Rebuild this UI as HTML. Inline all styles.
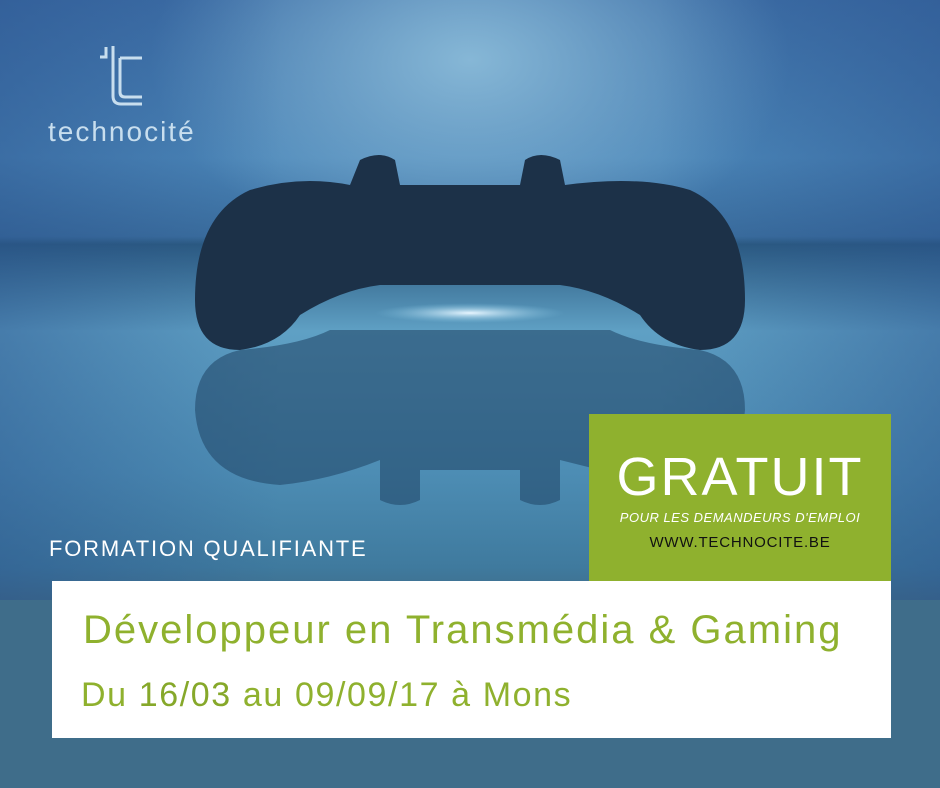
<!DOCTYPE html>
<html><head><meta charset="utf-8"><style>
*{margin:0;padding:0;box-sizing:border-box}
body{width:940px;height:788px;overflow:hidden;position:relative;font-family:"Liberation Sans",sans-serif;background:#3f6d8a}
.bg{position:absolute;left:0;top:0;width:940px;height:788px;
background:
radial-gradient(ellipse 320px 200px at 470px 60px,#86b7d6 0%,rgba(120,170,205,0) 100%),
linear-gradient(180deg,#3d6ea6 0%,#4b86b8 20%,#3b6e9e 30%,#2b5a80 31%,#5fa0c4 42%,#4d8db4 60%,#3f7a9e 72%,#3f6d8a 76%,#3f6d8a 100%);}
.bg2{position:absolute;left:0;top:0;width:940px;height:600px;background:linear-gradient(90deg,rgba(40,80,140,.45) 0%,rgba(0,0,0,0) 30%,rgba(0,0,0,0) 70%,rgba(40,80,140,.45) 100%)}
.green{position:absolute;left:589px;top:414px;width:302px;height:167px;background:#8fb12e;text-align:center;color:#fff}
.white{position:absolute;left:52px;top:581px;width:839px;height:157px;background:#fff}
</style></head><body>
<div class="bg"></div><div class="bg2"></div>
<svg style="position:absolute;left:0;top:0" width="940" height="600">
<defs><radialGradient id="g" cx="50%" cy="50%" r="50%"><stop offset="0" stop-color="#e8f6ff"/><stop offset="1" stop-color="#7cc0e0" stop-opacity="0"/></radialGradient></defs>
<path d="M250 190 Q300 175 350 185 L360 160 Q380 150 395 160 L400 185 L520 185 L525 160 Q540 150 560 160 L565 185 Q640 175 690 190 Q745 215 745 300 Q745 350 700 350 Q660 345 640 315 Q600 290 560 285 L380 285 Q340 290 300 315 Q280 345 240 350 Q195 350 195 300 Q195 215 250 190Z" fill="#1c3148"/>
<ellipse cx="470" cy="313" rx="95" ry="10" fill="url(#g)"/>
<path d="M240 350 Q300 345 330 330 L610 330 Q640 345 700 350 Q745 360 745 410 Q740 470 690 485 Q640 490 600 470 L560 460 L560 500 Q540 510 520 500 L520 470 L420 470 L420 500 Q400 510 380 500 L380 460 Q330 480 280 485 Q200 480 195 410 Q195 360 240 350Z" fill="#234a6a" opacity=".6"/>
</svg>
<svg style="position:absolute;left:98px;top:44px" width="46" height="64" viewBox="0 0 46 64" fill="none" stroke="#c8deee" stroke-width="3">
<path d="M2 13 H8 V3"/><path d="M15 2 V52 Q15 60 23 60 H44"/><path d="M22 14 H44 M22 14 V48 Q22 53 27 53 H44"/>
</svg>
<div style="position:absolute;left:48px;top:116px;font-size:28px;color:#c8deee;letter-spacing:2px">technocité</div>
<div style="position:absolute;left:49px;top:536px;font-size:22px;color:#fff;letter-spacing:1.8px">FORMATION QUALIFIANTE</div>
<div class="green">
<div style="font-size:54px;letter-spacing:2px;margin-top:38px;line-height:50px">GRATUIT</div>
<div style="font-size:13px;font-style:italic;margin-top:8px;letter-spacing:.5px">POUR LES DEMANDEURS D'EMPLOI</div>
<div style="font-size:15px;color:#111;margin-top:9px;letter-spacing:.8px">WWW.TECHNOCITE.BE</div>
</div>
<div class="white">
<div style="position:absolute;left:31px;top:27px;font-size:40px;color:#8fb12e;letter-spacing:2px;white-space:nowrap">Développeur en Transmédia &amp; Gaming</div>
<div style="position:absolute;left:29px;top:95px;font-size:34px;color:#8fb12e;letter-spacing:1.6px;white-space:nowrap">Du <span style="color:#86a82a">16/03</span> au <span>09/09/17</span> à Mons</div>
</div>
</body></html>
